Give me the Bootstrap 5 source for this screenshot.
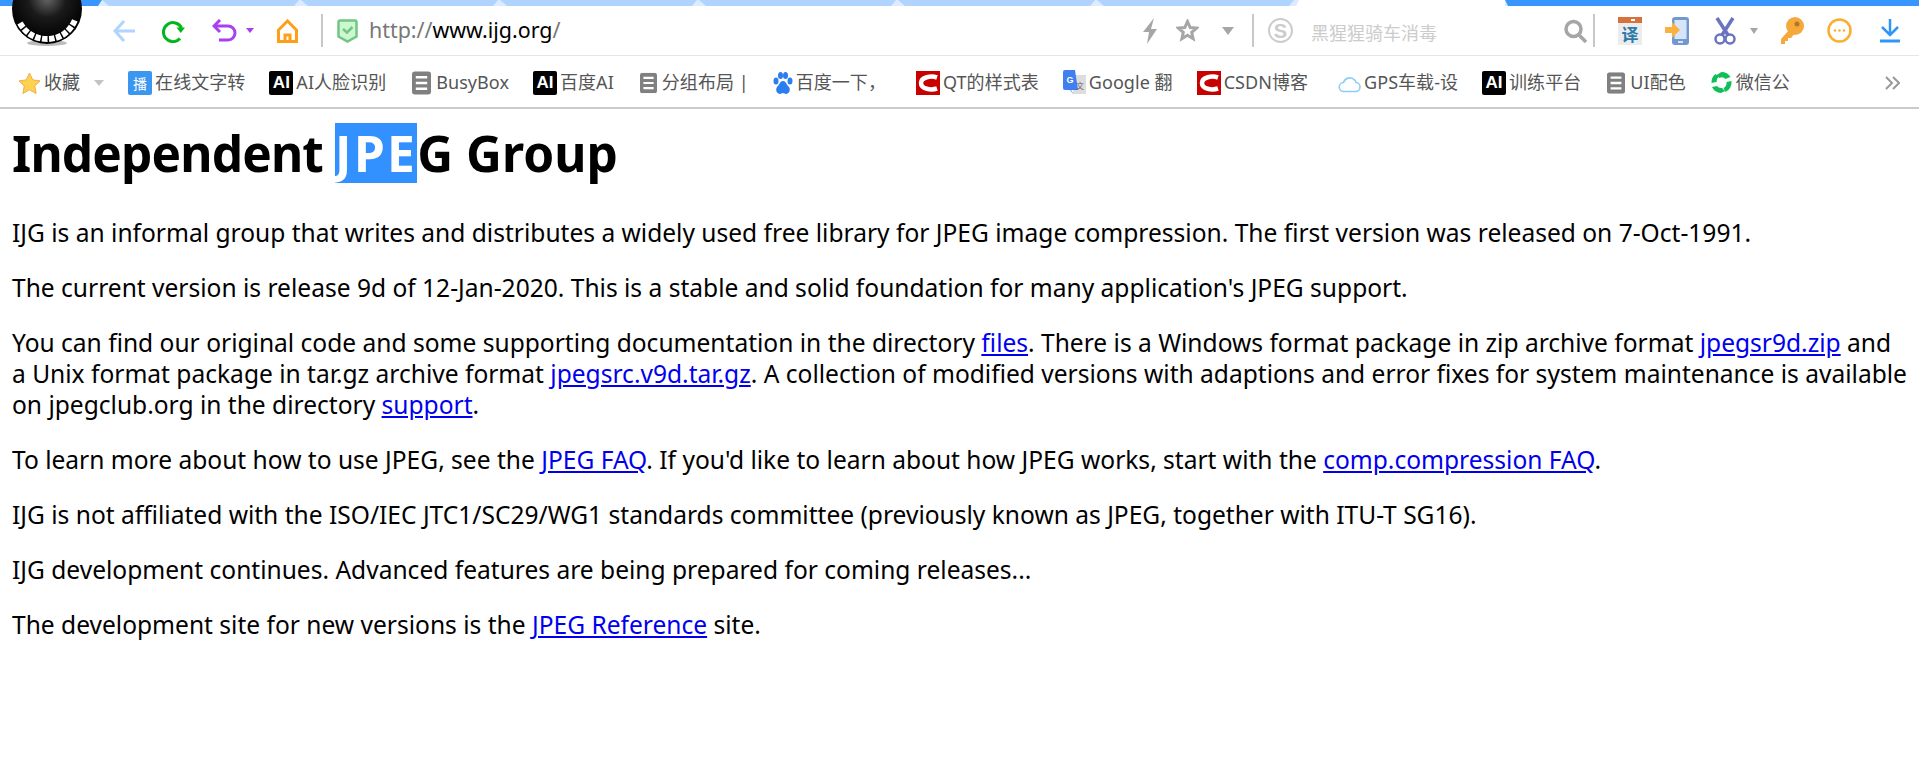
<!DOCTYPE html>
<html lang="en">
<head>
<meta charset="utf-8">
<title>Independent JPEG Group</title>
<link href="https://cdn.jsdelivr.net/npm/bootstrap@5.3.0/dist/css/bootstrap.min.css" rel="stylesheet">
<style>
body {background:#fff; color:#000; font-family:"Noto Sans","Noto Sans CJK SC",sans-serif; overflow:hidden;}
svg {display:block; flex:none;}

/* tab strip */
.tab-strip {height:6px; background:#dcebff;}
.tab-first {width:102px; background:#3a96ff; clip-path:polygon(0 0,100% 0,calc(100% - 4px) 100%,0 100%);}
.tab-light {width:199px; background:#b0d4ff; clip-path:polygon(0 0,calc(100% - 2px) 0,calc(100% - 7px) 100%,7px 100%);}
.tab-blank {background:#fff; clip-path:polygon(3px 0,100% 0,100% 100%,0 100%);}
.tab-active {width:414px; background:#3a96ff; clip-path:polygon(0 0,100% 0,100% 100%,3px 100%);}
.app-logo {position:absolute; left:12px; top:0; z-index:2;}

/* toolbar */
.tool-row {height:50px; padding-left:113px; padding-right:19px; border-bottom:1px solid #e6e6e6;}
.tb-sep {width:2px; height:33px; background:#c8c8c8; flex:none;}
.url-text {font-size:21.4px; color:#777; margin-left:11px;}
.url-text b {font-weight:400; color:#000;}
.search-hint {font-size:18px; color:#ccc; margin-left:18px; width:253px; padding-top:3px; font-family:"Noto Sans CJK SC",sans-serif;}
.ms-27 {margin-left:27px;} .ms-25 {margin-left:25px;} .ms-9 {margin-left:9px;} .ms-23 {margin-left:23px;} .ms-14 {margin-left:14px;} .ms-22 {margin-left:22px;} .ms-18 {margin-left:18px;} .ms-11 {margin-left:11px;} .ms-6 {margin-left:6px;} .ms-28 {margin-left:28px;}

/* bookmark bar */
.fav-row {height:53px; padding:2px 19px 0 18px; border-bottom:2px solid #cbcbcb; gap:24px; font-size:18px; letter-spacing:.05px; color:#555; white-space:nowrap;}
.fav-item {display:flex; align-items:center; gap:3px;}
.fav-wide {gap:5px; margin-left:2px;}
.fav-push {margin-left:6px;}
.fav-ai {width:24px; height:24px; background:#000; color:#fff; border-radius:2px; font:700 17px/24px "Liberation Sans",sans-serif; letter-spacing:0; text-align:center; flex:none;}
.fav-bo {width:24px; height:24px; background:#3a96ee; color:#fff; border-radius:2px; font:14px/24px "Noto Sans CJK SC",sans-serif; letter-spacing:0; text-align:center; flex:none;}
.fav-more {margin-left:auto;}

/* page */
.page-body {padding:0 12px;}
.page-body h1 {font-size:49.6px; font-weight:700; line-height:63px; margin:13px 0 32px; letter-spacing:-.85px;}
.page-body p {font-size:24.55px; line-height:31px; margin:0 0 24px; white-space:nowrap;}
.page-body a {color:#0000ee;}
.sel-text {display:inline-block; line-height:60px; background:#3390ff; color:#fff; letter-spacing:2.4px;}
.head-rest {letter-spacing:0;}
</style>
</head>
<body>

<svg width="0" height="0" class="position-absolute">
  <symbol id="doc" viewBox="0 0 20 24"><rect width="20" height="24" rx="3" fill="#808080"/><path d="M4 6h12M4 12h12M4 18h12" stroke="#fff" stroke-width="2.6"/></symbol>
  <symbol id="csdn" viewBox="0 0 24 24"><rect width="24" height="24" fill="#c80000"/><path d="M21 6.500C15 4.500 5 6 5 12s10 7.500 16 5.500" fill="none" stroke="#fff" stroke-width="4.500"/></symbol>
</svg>

<svg class="app-logo" width="72" height="47" viewBox="0 0 72 47">
  <defs><radialGradient id="ball" cx=".5" cy=".35" r=".6"><stop offset="0" stop-color="#666"/><stop offset=".45" stop-color="#1a1a1a"/><stop offset="1" stop-color="#000"/></radialGradient></defs>
  <ellipse cx="35" cy="43" rx="20" ry="3" fill="#bbb"/>
  <circle cx="35" cy="9" r="35" fill="url(#ball)"/>
  <path d="M8 23C14 34 24 39 35 39S57 34 63 20" fill="none" stroke="#fff" stroke-width="6" stroke-dasharray="5.500 1.500"/>
</svg>

<div class="tab-strip d-flex">
  <div class="tab-first"></div>
  <div class="tab-light"></div><div class="tab-light"></div><div class="tab-light"></div><div class="tab-light"></div><div class="tab-light"></div><div class="tab-light"></div>
  <div class="tab-blank flex-grow-1"></div>
  <div class="tab-active"></div>
</div>

<div class="tool-row d-flex align-items-center">
  <svg width="22" height="24" viewBox="0 0 22 24"><path d="M11 2 2 12l9 10M2 12h20" fill="none" stroke="#b0d4ff" stroke-width="3"/></svg>
  <svg class="ms-27" width="23" height="24" viewBox="0 0 23 24"><path d="M18 19.500A9.500 9.500 0 1 1 19.500 9" fill="none" stroke="#00b81c" stroke-width="3"/><path d="M14.500 8.500h8.500l-4.200 5.500z" fill="#00b81c"/></svg>
  <svg class="ms-27" width="25" height="24" viewBox="0 0 25 24"><path d="M2 7h14a7 7 0 0 1 0 14H7" fill="none" stroke="#a93ff0" stroke-width="3"/><path d="M8 1 2 7l6 6" fill="none" stroke="#a93ff0" stroke-width="3"/></svg>
  <svg class="ms-9" width="8" height="5" viewBox="0 0 8 5"><path d="M0 0h8L4 5z" fill="#a93ff0"/></svg>
  <svg class="ms-23" width="21" height="24" viewBox="0 0 21 24"><path d="M10.500 2 1.500 11v11.500h18V11zM8 22.500V16h5v6.500" fill="none" stroke="#ff9f17" stroke-width="3"/></svg>
  <div class="tb-sep ms-23"></div>
  <svg class="ms-14" width="21" height="24" viewBox="0 0 21 24"><path d="M1.500 3q0-1.500 1.500-1.500h15q1.500 0 1.500 1.500v14.500l-9 5-9-5z" fill="#cdf7d1" stroke="#73c583" stroke-width="2.500"/><path d="m6 10 4 3.500L15.500 8" fill="none" stroke="#73c583" stroke-width="2.500"/></svg>
  <div class="url-text">http://<b>www.ijg.org</b>/</div>

  <svg class="ms-auto" width="16" height="26" viewBox="0 0 16 26"><path d="M12 0 1 14h6L5 26l10-15H9z" fill="#a6a6a6"/></svg>
  <svg class="ms-18" width="23" height="23" viewBox="0 0 23 23"><path d="m11.500 2.500 2.700 6 6.300.6-4.800 4.200 1.400 6.400-5.600-3.400-5.600 3.400 1.400-6.400L2.500 9.100l6.300-.6z" fill="none" stroke="#a6a6a6" stroke-width="3"/></svg>
  <svg class="ms-23" width="12" height="8" viewBox="0 0 12 8"><path d="M0 0h12L6 8z" fill="#a6a6a6"/></svg>
  <div class="tb-sep ms-18"></div>
  <svg class="ms-14" width="25" height="27" viewBox="0 0 25 27"><circle cx="12.500" cy="13.500" r="11.500" fill="none" stroke="#ccc" stroke-width="2"/><text x="12.500" y="20.500" text-anchor="middle" font-family="Liberation Sans" font-weight="700" font-size="20" fill="#ccc">S</text></svg>
  <div class="search-hint">黑猩猩骑车消毒</div>
  <svg width="23" height="24" viewBox="0 0 23 24"><circle cx="9.500" cy="10" r="7.500" fill="none" stroke="#a6a6a6" stroke-width="3.500"/><path d="m15 16 7 7" stroke="#a6a6a6" stroke-width="3.500"/></svg>
  <div class="tb-sep ms-6"></div>
  <svg class="ms-23" width="24" height="28" viewBox="0 0 24 28"><rect width="24" height="28" fill="#ececec"/><rect width="24" height="6" fill="#d9713c"/><rect x="13" y="2" width="4" height="2" fill="#fff"/><text x="12" y="24" text-anchor="middle" font-family="Noto Sans CJK SC" font-weight="700" font-size="17" fill="#2d7bab">译</text></svg>
  <svg class="ms-23" width="24" height="28" viewBox="0 0 24 28"><rect x="7" width="17" height="28" rx="3" fill="#7398cf"/><rect x="9.500" y="3" width="12" height="19" fill="#d7e5fb"/><rect x="13" y="24" width="5" height="2" fill="#d7e5fb"/><path d="M0 10h7V5l8 8-8 8v-5H0z" fill="#fbb040"/></svg>
  <svg class="ms-25" width="22" height="28" viewBox="0 0 22 28"><path d="M3 1 14 18M19 1 8 18" stroke="#6a73bd" stroke-width="3.500"/><circle cx="6" cy="22" r="4.500" fill="none" stroke="#6a73bd" stroke-width="2.500"/><circle cx="16" cy="22" r="4.500" fill="none" stroke="#6a73bd" stroke-width="2.500"/></svg>
  <svg class="ms-14" width="8" height="6" viewBox="0 0 8 6"><path d="M0 0h8L4 6z" fill="#a6a6a6"/></svg>
  <svg class="ms-22" width="24" height="28" viewBox="0 0 24 28"><circle cx="15" cy="9" r="9" fill="#f6a93b"/><path d="M9 13 1 22v5h4v-3h3v-3h3l4-5z" fill="#f6a93b"/><circle cx="17" cy="7" r="2.500" fill="#b4742a"/></svg>
  <svg class="ms-23" width="25" height="25" viewBox="0 0 25 25"><circle cx="12.500" cy="12.500" r="11" fill="none" stroke="#fbae2d" stroke-width="2.500"/><circle cx="8" cy="12.500" r="1.300" fill="#fbae2d"/><circle cx="12.500" cy="12.500" r="1.300" fill="#fbae2d"/><circle cx="17" cy="12.500" r="1.300" fill="#fbae2d"/></svg>
  <svg class="ms-28" width="20" height="24" viewBox="0 0 20 24"><path d="M10 0v15M2 8l8 8 8-8" fill="none" stroke="#2e96f5" stroke-width="2.500"/><path d="M0 22h20" stroke="#2e96f5" stroke-width="3"/></svg>
</div>

<div class="fav-row d-flex align-items-center">
  <div class="fav-item">
    <svg width="23" height="22" viewBox="0 0 23 22"><path d="m11.500 1 3.300 6.900 7.200 1-5.300 5.100 1.400 7.500-6.600-3.700-6.600 3.700L6.300 14 1 8.900l7.200-1z" fill="#fcd24f" stroke="#f4a950"/></svg>
    <span>收藏</span>
    <svg class="ms-11" width="10" height="6" viewBox="0 0 10 6"><path d="M0 0h10L5 6z" fill="#c4c4c4"/></svg>
  </div>
  <div class="fav-item"><div class="fav-bo">播</div><span>在线文字转</span></div>
  <div class="fav-item"><div class="fav-ai">AI</div><span>AI人脸识别</span></div>
  <div class="fav-item fav-wide"><svg width="19" height="24"><use href="#doc"/></svg><span>BusyBox</span></div>
  <div class="fav-item"><div class="fav-ai">AI</div><span>百度AI</span></div>
  <div class="fav-item fav-wide"><svg width="17" height="24" viewBox="0 0 20 24"><use href="#doc"/></svg><span>分组布局 |</span></div>
  <div class="fav-item">
    <svg width="20" height="24" viewBox="0 0 20 24"><g fill="#2c7df0"><ellipse cx="3" cy="10" rx="2.500" ry="3.500"/><ellipse cx="7.500" cy="4.500" rx="2.500" ry="3.500"/><ellipse cx="12.500" cy="4.500" rx="2.500" ry="3.500"/><ellipse cx="17" cy="10" rx="2.500" ry="3.500"/><path d="M10 10c3 0 3 3 6 6 2 3 0 7-3 7-1 0-2-1-3-1s-2 1-3 1c-3 0-5-4-3-7 3-3 3-6 6-6z"/></g></svg>
    <span>百度一下，</span>
  </div>
  <div class="fav-item fav-push"><svg width="24" height="24"><use href="#csdn"/></svg><span>QT的样式表</span></div>
  <div class="fav-item">
    <svg width="23" height="26" viewBox="0 0 23 26"><path d="M10 5h13v19H10z" fill="#ddd"/><path d="M2 0h10l3 20H8l3 5-4-5H2q-2 0-2-2V2q0-2 2-2z" fill="#3f7ff0"/><text x="7" y="13" text-anchor="middle" font-family="Liberation Sans" font-weight="700" font-size="9" fill="#fff">G</text><text x="17" y="19" text-anchor="middle" font-family="Noto Sans CJK SC" font-size="8" fill="#667">文</text></svg>
    <span>Google 翻</span>
  </div>
  <div class="fav-item"><svg width="24" height="24"><use href="#csdn"/></svg><span>CSDN博客</span></div>
  <div class="fav-item fav-push">
    <svg width="23" height="20" viewBox="0 0 23 20"><path d="M6 18.500a4.500 4.500 0 0 1-.5-9A6.500 6.500 0 0 1 16 6.500a4 4 0 0 1 2 3 4.500 4.500 0 0 1-1 9z" fill="#fff" stroke="#8fcdf7" stroke-width="1.600"/></svg>
    <span>GPS车载-设</span>
  </div>
  <div class="fav-item"><div class="fav-ai">AI</div><span>训练平台</span></div>
  <div class="fav-item fav-wide"><svg width="18" height="24" viewBox="0 0 20 24"><use href="#doc"/></svg><span>UI配色</span></div>
  <div class="fav-item">
    <svg width="23" height="25" viewBox="0 0 23 25"><path d="M11.500 2a10.500 10.500 0 0 1 9 5l-5 2a5 5 0 0 0-6-1l-3-3zM21.500 11a10.500 10.500 0 0 1-6 11l-2-4a6 6 0 0 0 3-6zM11 23a10.500 10.500 0 0 1-9-6l5-1a5 5 0 0 0 5 2l3 3zM1.500 13a10.500 10.500 0 0 1 4-9l3 3a6 6 0 0 0-2 5z" fill="#0fc05a"/></svg>
    <span>微信公</span>
  </div>
  <svg class="fav-more" width="15" height="14" viewBox="0 0 15 14"><path d="m1 1 6 6-6 6M8 1l6 6-6 6" fill="none" stroke="#999" stroke-width="2"/></svg>
</div>

<div class="page-body">
  <h1>Independent <span class="sel-text">JPE</span><span class="head-rest">G Group</span></h1>
  <p>IJG is an informal group that writes and distributes a widely used free library for JPEG image compression. The first version was released on 7-Oct-1991.</p>
  <p>The current version is release 9d of 12-Jan-2020. This is a stable and solid foundation for many application's JPEG support.</p>
  <p>You can find our original code and some supporting documentation in the directory <a href="#">files</a>. There is a Windows format package in zip archive format <a href="#">jpegsr9d.zip</a> and<br>a Unix format package in tar.gz archive format <a href="#">jpegsrc.v9d.tar.gz</a>. A collection of modified versions with adaptions and error fixes for system maintenance is available<br>on jpegclub.org in the directory <a href="#">support</a>.</p>
  <p>To learn more about how to use JPEG, see the <a href="#">JPEG FAQ</a>. If you'd like to learn about how JPEG works, start with the <a href="#">comp.compression FAQ</a>.</p>
  <p>IJG is not affiliated with the ISO/IEC JTC1/SC29/WG1 standards committee (previously known as JPEG, together with ITU-T SG16).</p>
  <p>IJG development continues. Advanced features are being prepared for coming releases...</p>
  <p>The development site for new versions is the <a href="#">JPEG Reference</a> site.</p>
</div>

<script src="https://cdn.jsdelivr.net/npm/bootstrap@5.3.0/dist/js/bootstrap.bundle.min.js"></script>
</body>
</html>
